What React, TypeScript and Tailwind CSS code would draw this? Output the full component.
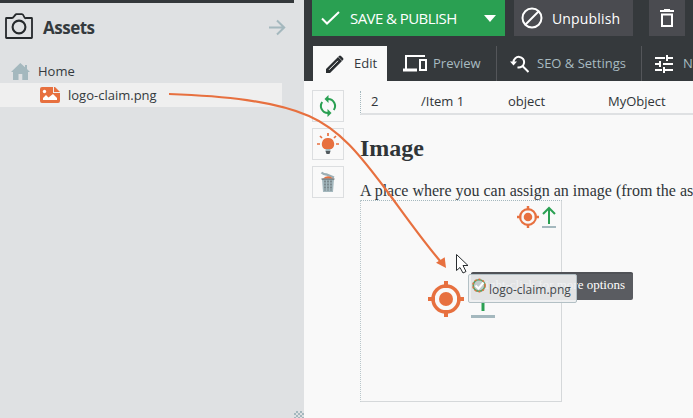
import React from 'react';

const sans = "font-['Open_Sans',sans-serif]";

function Target({ size }: { size: number }) {
  return (
    <svg width={size} height={size} viewBox="0 0 36 36" fill="none" stroke="#e7703f" strokeWidth="3.5" className="shrink-0">
      <circle cx="18" cy="18" r="13" />
      <circle cx="18" cy="18" r="7" fill="#e7703f" stroke="none" />
      <path d="M18 0v7M18 29v7M0 18h7M29 18h7" strokeWidth="4" />
    </svg>
  );
}

function AssetsPanel() {
  return (
    <aside className={`${sans} flex h-full w-[304px] shrink-0 flex-col bg-[#dfe1e3] text-[#343a3e]`}>
      <div className="h-[3px] w-[294px] bg-[#34383b]" />
      <div className="flex h-12 items-center pl-[5px] pr-[18px]">
        <svg className="-mt-[2px]" width="28" height="26" viewBox="0 0 28 26" fill="none" stroke="#25292c" strokeWidth="1.8" strokeLinejoin="round">
          <path d="M1 5.5Q1 5 1.5 5H7q1 0 2-1.5T11 1.2h6q1 0 2 2.3T21 5h5.5q.5 0 .5.5v19q0 .5-.5.5h-25q-.5 0-.5-.5z" />
          <circle cx="14" cy="14" r="6.4" strokeWidth="2.1" />
        </svg>
        <h1 className="ml-[10px] pt-px text-[17px] font-bold leading-6 tracking-[-0.5px]">Assets</h1>
        <svg className="ml-auto" width="17" height="17" viewBox="0 0 17 17" fill="none" stroke="#a4b8be" strokeWidth="2">
          <path d="M0 8.5h15M8 1.5l7.2 7L8 15.5" />
        </svg>
      </div>
      <div className="mt-[8px] flex h-6 items-center pl-[11px] text-[13px]">
        <svg width="19" height="17" viewBox="0 0 19 17" fill="#a4b8be">
          <path d="M9.3 0 0 9h2v8h5.5v-6h3.8v6H17V9h2l-3-3V2h-2v2.3z" />
        </svg>
        <span className="ml-[8px] pt-[2px]">Home</span>
      </div>
      <div className="flex h-6 w-[282px] items-center bg-[#efefef] pl-10 text-[13px]">
        <svg width="20" height="16" viewBox="0 0 20 16" fill="#e7703f">
          <path d="M2 0h11v6h7v8q0 2-2 2H2q-2 0-2-2V2q0-2 2-2z" />
          <path d="M14 0h1l5 5h-6z" />
          <circle cx="4.5" cy="4.5" r="1.7" fill="#fff" />
          <path d="M3 13v-2l3-3 2.5 2.5L13 7l4 4v2z" fill="#fff" />
        </svg>
        <span className="ml-[8px] pt-[2px]">logo-claim.png</span>
      </div>
      <div className="ml-auto mt-auto h-[7px] w-[10px] bg-[repeating-conic-gradient(#a4b8be_0_25%,transparent_0_50%)] bg-[length:4px_4px]" />
    </aside>
  );
}

function Header() {
  return (
    <header className={`${sans} h-[81px] bg-[#35393c] pl-2 text-white`}>
      <div className="flex h-9">
        <button className="flex h-9 w-[193px] items-center bg-[#2aa052] pl-[9px] text-[15px]">
          <svg width="19" height="14" viewBox="0 0 19 14" fill="none" stroke="#fff" strokeWidth="2">
            <path d="m1 7.5 5 5L18 1" />
          </svg>
          <span className="ml-[10px] whitespace-nowrap tracking-[-0.57px]">SAVE &amp; PUBLISH</span>
          <svg className="ml-auto mr-[9px]" width="12" height="7" viewBox="0 0 12 7" fill="#fff"><path d="M0 0h12L6 7z" /></svg>
        </button>
        <button className="ml-[9px] flex h-9 w-[119px] items-center bg-[#4a4b50] pl-[7px]">
          <svg width="22" height="22" viewBox="0 0 22 22" fill="none" stroke="#fff" strokeWidth="2">
            <circle cx="11" cy="11" r="9.5" /><path d="M4.5 17.5 17.5 4.5" />
          </svg>
          <span className="ml-[9px] text-[14px] font-medium tracking-[0.15px]">Unpublish</span>
        </button>
        <button className="ml-4 flex h-9 w-9 items-center justify-center bg-[#4a4b50]">
          <svg width="16" height="18" viewBox="0 0 16 18" fill="none" stroke="#fff" strokeWidth="2">
            <path d="M1 2h14M5 1h6M3 5.5h10V17H3z" />
          </svg>
        </button>
      </div>
      <nav className="mt-[10px] flex h-[35px] pl-px text-[13px] text-[#a8bbc1]">
        <div className="flex w-[74px] shrink-0 items-center bg-[#f9f9f9] pl-[13px] text-[#343a3e]">
          <svg width="18" height="18" viewBox="0 0 18 18" fill="#292d30">
            <path d="M0 14 12 2l4 4L4 18H0zM13 1q1-1 2 0l2 2q1 1 0 2l-.7.7-4-4z" />
            <path d="m3 14.8 9-9" stroke="#f9f9f9" strokeWidth="1" />
          </svg>
          <span className="ml-[10px]">Edit</span>
        </div>
        <div className="flex w-[110px] shrink-0 items-center border-r border-[#54565a] pl-4">
          <svg width="24" height="17" viewBox="0 0 24 17" fill="none" stroke="#fff" strokeWidth="2">
            <path d="M22 1H3v13" /><path d="M17 5h6v10h-6z" /><path d="M0 15h14" strokeWidth="3" />
          </svg>
          <span className="ml-[6px]">Preview</span>
        </div>
        <div className="flex w-[145px] shrink-0 items-center border-r border-[#54565a] pl-[13px]">
          <svg width="19" height="18" viewBox="0 0 19 18" fill="none" stroke="#fff" strokeWidth="2">
            <path d="M3.5 7a5.3 5.3 0 1 1 4 5.3M12.5 11l6 6" />
            <path d="M0 6.5h7L3.5 10.5z" fill="#fff" stroke="none" />
          </svg>
          <span className="ml-[8px] whitespace-nowrap">SEO &amp; Settings</span>
        </div>
        <div className="flex shrink-0 items-center pl-[13px]">
          <svg width="18" height="18" viewBox="0 0 18 18" fill="none" stroke="#fff" strokeWidth="2">
            <path d="M0 3h10M12 3h6M12 0v6M0 9h6M8 9h10M5 6v6M0 15h7M9 15h9M9 12v6" />
          </svg>
          <span className="ml-[10px] whitespace-nowrap">Notes &amp; Events</span>
        </div>
      </nav>
    </header>
  );
}

function Tool({ children }: { children: React.ReactNode }) {
  return <button className="flex h-8 w-8 items-center justify-center border border-[#dcdee0]">{children}</button>;
}

function ToolColumn() {
  return (
    <div className="flex w-8 shrink-0 flex-col gap-[6px] pt-[9px]">
      <Tool>
        <svg width="18" height="22" viewBox="0 0 18 22" fill="none" stroke="#2aa052" strokeWidth="2">
          <path d="M9 4a7 7 0 0 1 5.8 11M9 18A7 7 0 0 1 3.2 7" />
          <path d="M9.5 0v8l-4-4zM8.5 14v8l4-4z" fill="#2aa052" stroke="none" />
        </svg>
      </Tool>
      <Tool>
        <svg width="22" height="22" viewBox="0 0 22 22" fill="#e7703f">
          <path d="M11 5a6 6 0 0 0-3.5 11h7A6 6 0 0 0 11 5z" />
          <path d="M11 0v3M0 11h3M19 11h3M3 3l2 2M19 3l-2 2" stroke="#e7703f" strokeWidth="1.7" />
          <path d="M8.5 16h5v2h-5z" fill="#a4b8be" /><path d="M8.5 18h5l-1 3h-3z" fill="#52595d" />
        </svg>
      </Tool>
      <Tool>
        <svg width="16" height="22" viewBox="0 0 16 22" fill="none">
          <path d="M1.5 1.5q2 2 5 2l7.5 3" stroke="#9caeb4" strokeWidth="2.3" />
          <path d="M3 7.5q5-4.5 10 0z" fill="#e7703f" />
          <path d="M2 8h12l-1 13H3z" fill="#a4b8be" />
          <path d="M1.5 8h13" stroke="#52595d" />
          <path d="M5 9.5v10M8 9.5v10M11 9.5v10" stroke="#52595d" strokeDasharray="2 1" strokeWidth="1" />
        </svg>
      </Tool>
    </div>
  );
}

function Editor() {
  return (
    <main className="flex h-[337px] bg-[#f9f9f9] pl-2 text-[#303538]">
      <ToolColumn />
      <div className="ml-4 min-w-0 flex-1 font-['Liberation_Serif',serif]">
        <div className={`${sans} mt-[10px] grid h-6 grid-cols-[50px_87px_100px_100px] items-center border-b-2 border-l border-b-[#dfe1e3] border-l-[#a4b8be] pl-[10px] text-[13px] [border-left-style:dotted]`}>
          <span>2</span><span>/Item 1</span><span>object</span><span>MyObject</span>
        </div>
        <h2 className="mt-[18px] text-[24px] font-bold leading-[30px]">Image</h2>
        <p className="mt-[19px] h-[18px] whitespace-nowrap text-[16px] leading-[18px]">A place where you can assign an image (from the assets)</p>
        <div className="flex h-[202px] w-[202px] flex-col border border-[#d5d8da] border-l-[#b9c6ca] border-t-[#a4b8be] [border-left-style:dotted] [border-top-style:dotted]">
          <div className="ml-auto mr-[5px] mt-[5px] flex items-start gap-[3px]">
            <Target size={22} />
            <svg width="14" height="22" viewBox="0 0 14 22" fill="none" stroke="#2aa052" strokeWidth="2">
              <path d="M7 18V2M1 8l6-6 6 6" /><path d="M0 21h14" stroke="#a4b8be" />
            </svg>
          </div>
          <div className="mt-[53px] flex justify-center gap-[7px]">
            <Target size={36} />
            <svg width="24" height="38" viewBox="0 0 24 38" fill="none">
              <path d="M12 3v27" stroke="#2aa052" strokeWidth="3" /><path d="M0 35.5h24" stroke="#a4b8be" strokeWidth="3" />
            </svg>
          </div>
        </div>
      </div>
    </main>
  );
}

function DragOverlay() {
  return (
    <>
      <div className="absolute left-[471px] top-[272px] flex h-[28px] w-[162px] items-center justify-end rounded-[2px] border-t-2 border-[#505257] bg-[#5a5c61] pb-[5px] pr-2 font-['Liberation_Serif',serif] text-[13px] text-white">
        <span className="whitespace-nowrap">Right-click for more options</span>
      </div>
      <div className={`${sans} absolute left-[468px] top-[274px] flex h-[29px] w-[109px] items-start rounded-[2px] border border-[#b3c0c5] bg-[#eeeff0]/92 pl-[3px] pt-[3px] text-[12px] text-[#42484c]`}>
        <svg width="14" height="15" viewBox="0 0 14 15" fill="none">
          <circle cx="7" cy="7.5" r="5.8" fill="#c1cbcc" stroke="#54a466" strokeWidth="1.5" />
          <circle cx="7" cy="7.5" r="6.2" stroke="#e7703f" strokeWidth="1.4" strokeDasharray="2 2" />
          <path d="m3.5 7.5 3 3 5-6" stroke="#fff" strokeWidth="2" />
        </svg>
        <span className="ml-[3px] mt-[3px] leading-[18px]">logo-claim.png</span>
      </div>
      <svg className="absolute left-0 top-0" width="693" height="418" viewBox="0 0 693 418" fill="none">
        <path d="M169 94C225 96 274 101 309 116C343 131 364 161 384 187C404 214 422 240 441 262" stroke="#e7703f" strokeWidth="2.2" />
        <path d="m446 268-10-5.3 8.7-5.4z" fill="#e7703f" />
        <path d="M456.5 254.5v16l3.5-3 3 5.5 3-1.5-3-6h5z" fill="#fff" stroke="#292d30" />
      </svg>
    </>
  );
}

export default function App() {
  return (
    <div className="relative flex h-[418px] w-[693px] overflow-hidden">
      <AssetsPanel />
      <section className="min-w-0 flex-1 overflow-hidden"><Header /><Editor /></section>
      <DragOverlay />
    </div>
  );
}
